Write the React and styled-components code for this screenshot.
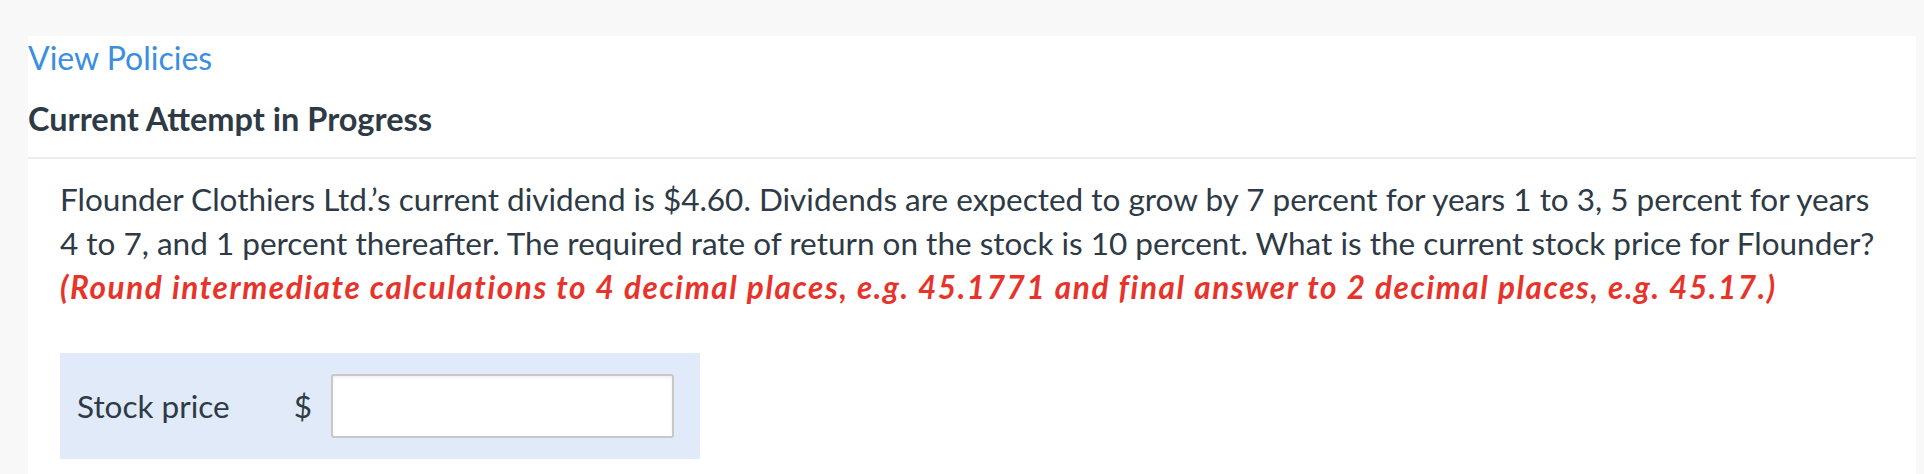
import React from 'react'
import styled, { createGlobalStyle } from 'styled-components'

const GlobalStyle = createGlobalStyle`
  html, body {
    margin: 0;
    padding: 0;
    background: #f8f8f8;
  }
  body {
    font-family: Lato, 'Open Sans', sans-serif;
    color: #2e3a45;
  }
`

const App = () => (
  <>
    <GlobalStyle />
    <Page>
      <Panel>
        <Header>
          <PolicyLink href="#">View Policies</PolicyLink>
          <AttemptTitle>Current Attempt in Progress</AttemptTitle>
        </Header>
        <QuestionBody>
          <QuestionText>
            Flounder Clothiers Ltd.’s current dividend is $4.60. Dividends are expected to grow by 7 percent for years 1 to 3, 5 percent for years 4 to 7, and 1 percent thereafter. The required rate of return on the stock is 10 percent. What is the current stock price for Flounder?{' '}
            <Hint>(Round intermediate calculations to 4 decimal places, e.g. 45.1771 and final answer to 2 decimal places, e.g. 45.17.)</Hint>
          </QuestionText>
          <AnswerBox>
            <AnswerLabel>Stock price</AnswerLabel>
            <Currency>$</Currency>
            <AnswerInput type="text" />
          </AnswerBox>
        </QuestionBody>
      </Panel>
    </Page>
  </>
)

export default App

const Page = styled.div`
  padding: 36px 8px 0 28px;
  min-height: 474px;
  box-sizing: border-box;
  display: flex;
  flex-direction: column;
`
const Panel = styled.div`
  flex: 1;
  background: #fff;
`
const Header = styled.div`
  display: flex;
  flex-direction: column;
  align-items: flex-start;
  padding: 2px 0 19px 0;
  border-bottom: 2px solid #ececec;
`
const PolicyLink = styled.a`
  color: #3b8ee0;
  font-size: 32px;
  text-decoration: none;
  line-height: normal;
`
const AttemptTitle = styled.h2`
  margin: 22px 0 0;
  font-size: 32.5px;
  font-weight: 700;
  line-height: normal;
  color: #2e3a45;
`
const QuestionBody = styled.div`
  padding: 18px 36px 0 32px;
`
const QuestionText = styled.p`
  margin: 0;
  font-size: 31.5px;
  line-height: 44px;
  color: #2e3a45;
`
const Hint = styled.em`
  display: block;
  color: #e8332a;
  font-weight: 700;
  font-style: italic;
  letter-spacing: 1.6px;
`
const AnswerBox = styled.div`
  display: flex;
  align-items: center;
  width: 640px;
  height: 106px;
  box-sizing: border-box;
  margin-top: 44px;
  padding: 0 26px 0 17px;
  background: #e0eaf8;
`
const AnswerLabel = styled.span`
  font-size: 31.5px;
  width: 220px;
`
const Currency = styled.span`
  font-size: 31.5px;
  margin-right: 19px;
`
const AnswerInput = styled.input`
  width: 343px;
  height: 64px;
  box-sizing: border-box;
  border: 2px solid #c8c8c8;
  border-radius: 3px;
  box-shadow: inset 0 2px 3px rgba(0, 0, 0, 0.06);
  background: #fff;
  font-size: 28px;
  font-family: Lato, sans-serif;
  outline: none;
`
